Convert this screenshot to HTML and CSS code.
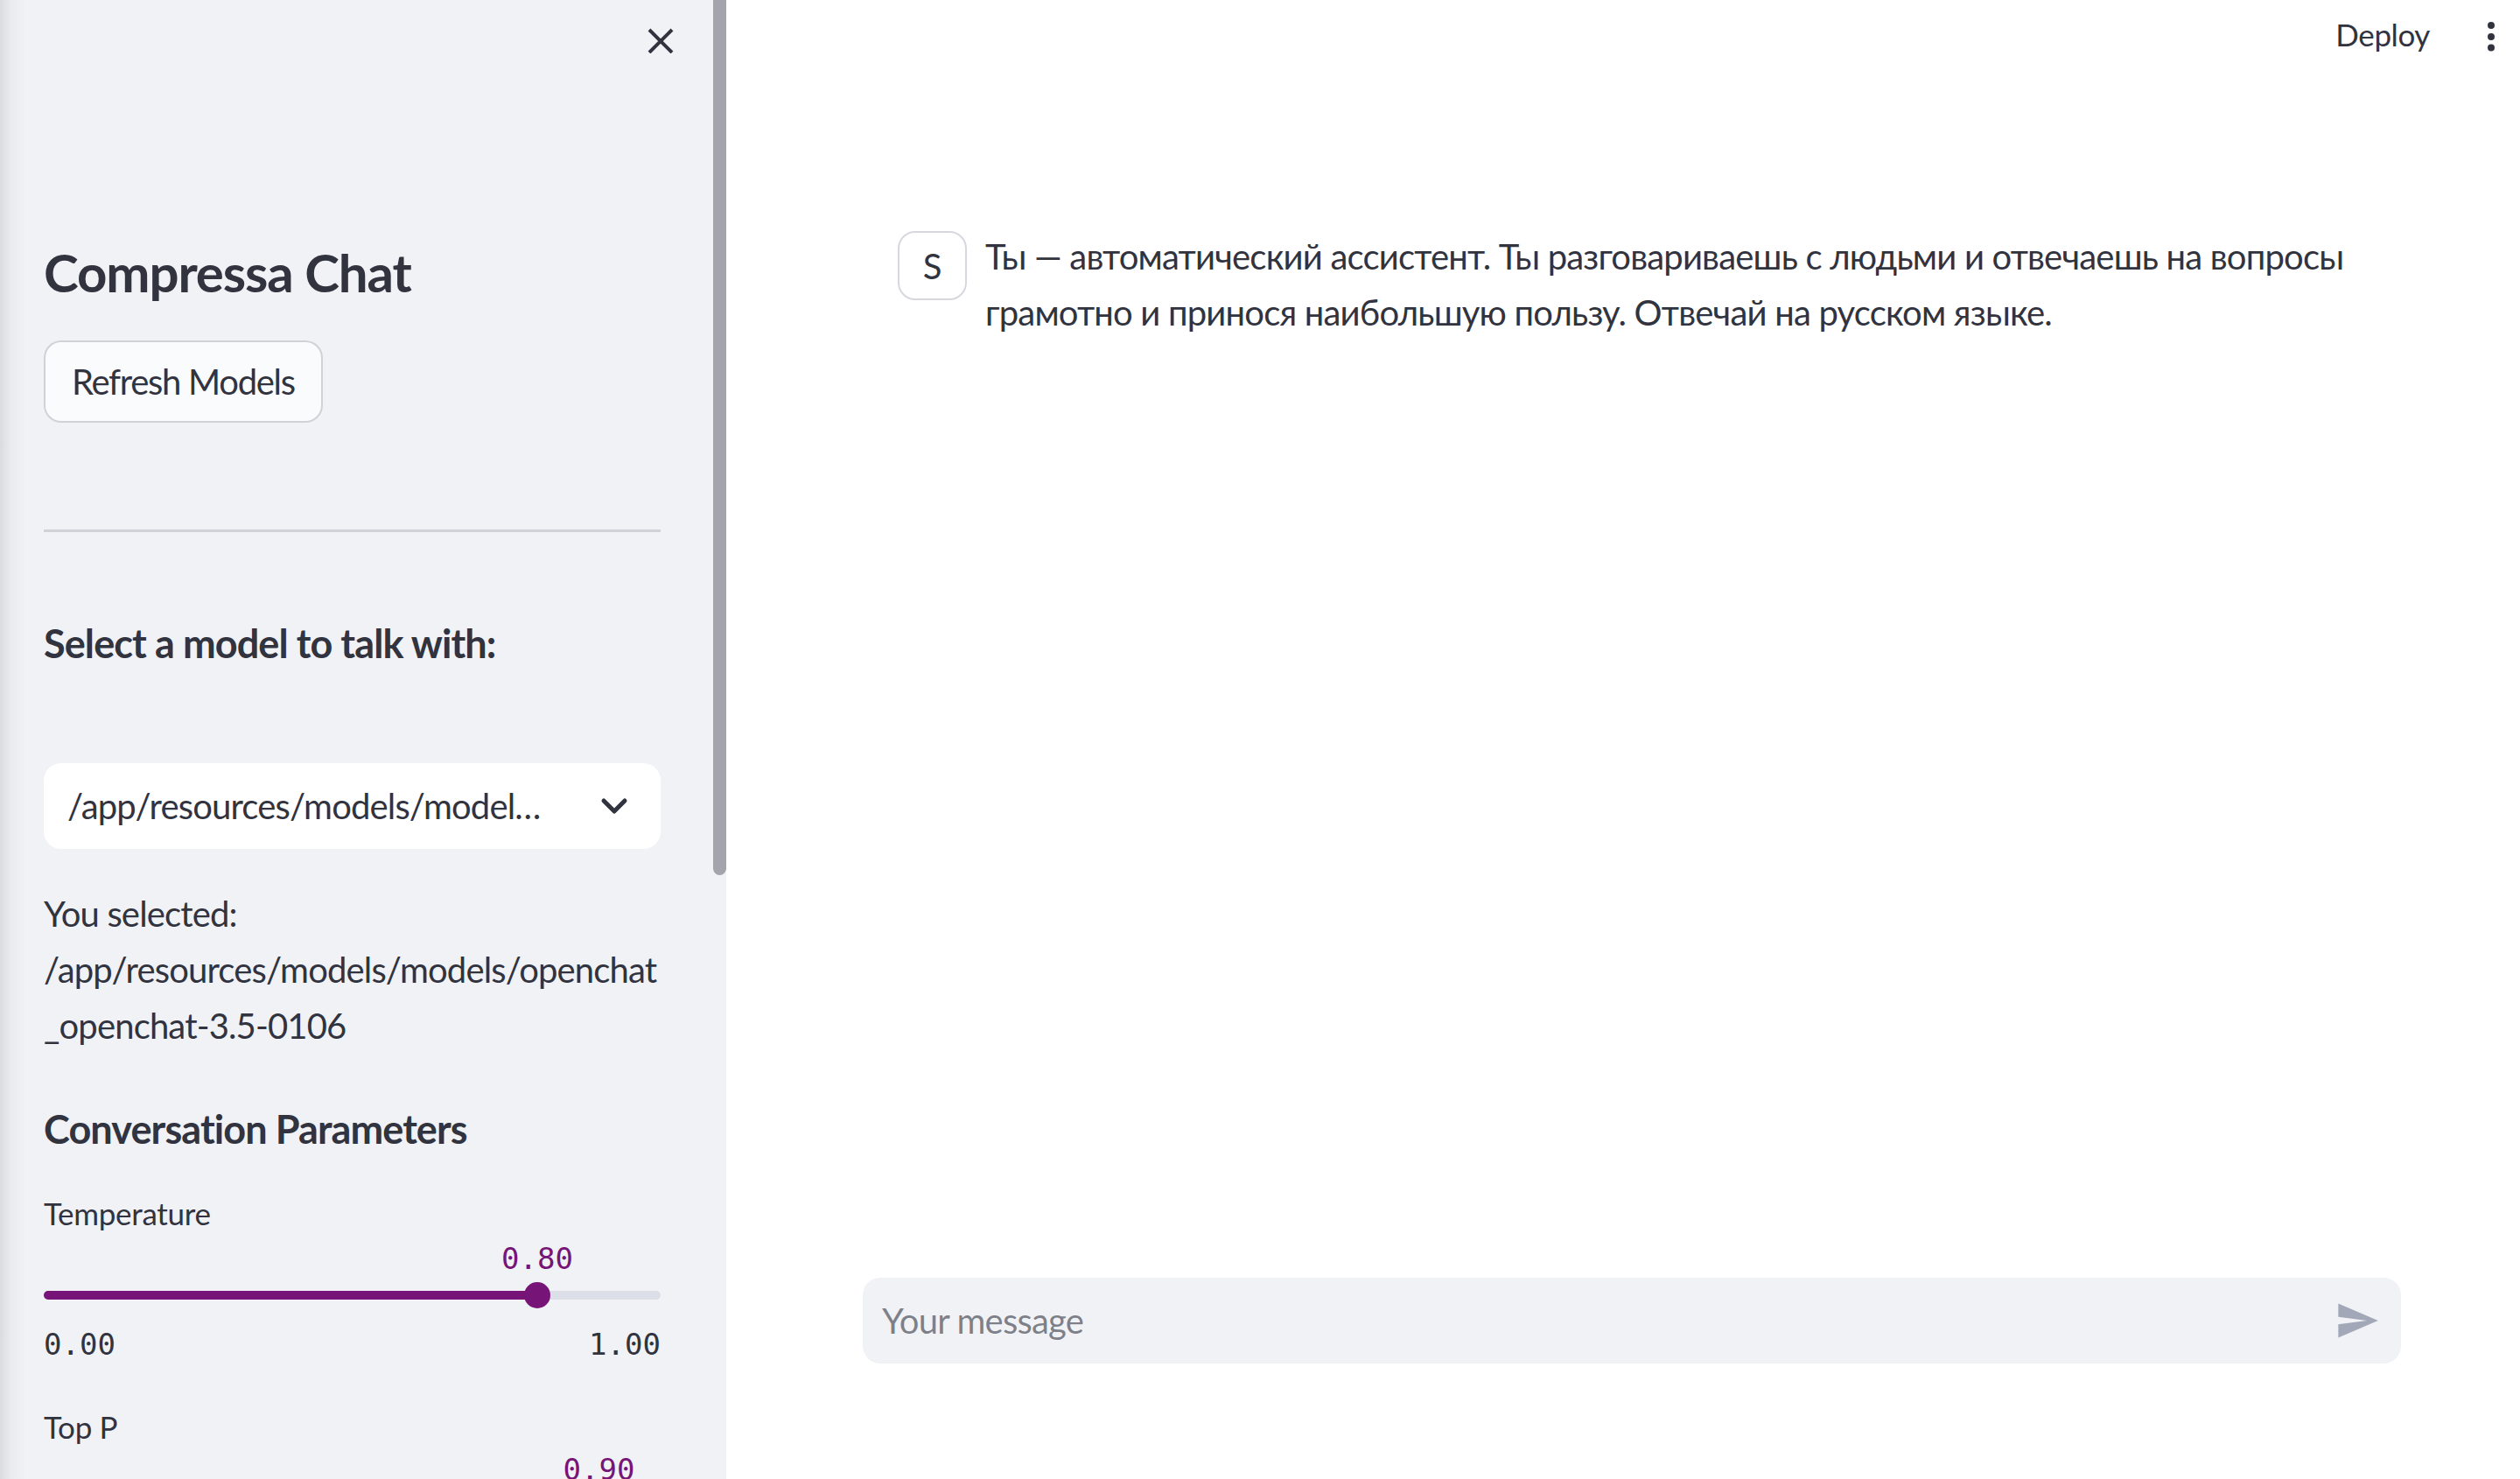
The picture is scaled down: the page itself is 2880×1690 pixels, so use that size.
FILE: index.html
```html
<!DOCTYPE html>
<html lang="ru">
<head>
<meta charset="utf-8">
<title>Compressa Chat</title>
<link rel="stylesheet" href="styles.css">
</head>
<body>
<div class="app">
  <aside class="sidebar">
    <div class="sidebar-inner">
      <div class="sb-header">
        <button class="close-btn" aria-label="Close sidebar">
          <svg width="30" height="30" viewBox="0 0 30 30"><path d="M2 3 L28 29 M28 3 L2 29" stroke="#31333f" stroke-width="4" fill="none"/></svg>
        </button>
      </div>
      <h1 class="sb-title">Compressa Chat</h1>
      <button class="btn">Refresh Models</button>
      <hr class="divider">
      <h3 class="sb-sub select-head">Select a model to talk with:</h3>
      <div class="select">
        <span class="select-value">/app/resources/models/model…</span>
        <svg class="chevron" width="34" height="24" viewBox="0 0 34 24"><path d="M5 6 L17 18 L29 6" stroke="#31333f" stroke-width="5" fill="none" stroke-linecap="round" stroke-linejoin="round"/></svg>
      </div>
      <div class="selected">
        <span class="line">You selected:</span>
        <span class="line">/app/resources/models/models/openchat</span>
        <span class="line">_openchat-3.5-0106</span>
      </div>
      <h3 class="sb-sub params-head">Conversation Parameters</h3>
      <div class="slider-widget temp">
        <div class="slider-label">Temperature</div>
        <div class="slider-value-row"><span class="slider-value" style="left:80%">0.80</span></div>
        <div class="track"><div class="fill" style="width:80%"></div><div class="thumb" style="left:80%"></div></div>
        <div class="ticks"><span>0.00</span><span>1.00</span></div>
      </div>
      <div class="slider-widget topp">
        <div class="slider-label">Top P</div>
        <div class="slider-value-row"><span class="slider-value" style="left:90%">0.90</span></div>
        <div class="track"><div class="fill" style="width:90%"></div><div class="thumb" style="left:90%"></div></div>
        <div class="ticks"><span>0.00</span><span>1.00</span></div>
      </div>
    </div>
    <div class="scroll-thumb"></div>
  </aside>
  <main class="main">
    <header class="toolbar">
      <span class="deploy">Deploy</span>
      <svg class="dots" width="8" height="34" viewBox="0 0 8 34"><circle cx="4" cy="4" r="4" fill="#31333f"/><circle cx="4" cy="17" r="4" fill="#31333f"/><circle cx="4" cy="29.5" r="4" fill="#31333f"/></svg>
    </header>
    <section class="chat">
      <div class="message">
        <div class="avatar">S</div>
        <div class="msg-text">Ты — автоматический ассистент. Ты разговариваешь с людьми и отвечаешь на вопросы грамотно и принося наибольшую пользу. Отвечай на русском языке.</div>
      </div>
    </section>
    <div class="bottom">
      <div class="chat-input">
        <span class="placeholder">Your message</span>
        <svg class="send" width="52" height="52" viewBox="0 0 24 24"><path d="M2.01 21L23 12 2.01 3 2 10l15 2-15 2z" fill="#a3a8b8"/></svg>
      </div>
    </div>
  </main>
</div>
</body>
</html>
```
FILE: styles.css
```css
* { box-sizing: border-box; }
html, body { margin: 0; padding: 0; }
body {
  width: 2880px;
  height: 1690px;
  overflow: hidden;
  background: #ffffff;
  color: #31333f;
  font-family: Lato, "Noto Sans", sans-serif;
}
.app { display: flex; height: 1690px; }

/* Sidebar */
.sidebar {
  position: relative;
  flex: none;
  width: 830px;
  height: 1690px;
  overflow: hidden;
  background: linear-gradient(to right, #d9dbe0 0px, #e9ebef 12px, #f0f2f6 30px);
}
.sidebar-inner { padding: 0 75px 0 50px; }
.sb-header { display: flex; justify-content: flex-end; padding-top: 31px; margin-right: -15px; }
.close-btn { border: 0; background: none; padding: 0; width: 30px; height: 30px; display: block; }
.close-btn svg { display: block; }
.sb-title {
  margin: 214px 0 0;
  font-size: 60px;
  line-height: 72px;
  font-weight: 700;
  letter-spacing: -1.1px;
}
.btn {
  display: flex;
  align-items: center;
  margin-top: 42px;
  height: 94px;
  padding: 0 30px;
  border: 2.5px solid rgba(49, 51, 63, 0.2);
  border-radius: 20px;
  background: #fafbfc;
  color: #31333f;
  font-family: inherit;
  font-size: 40px;
  letter-spacing: -1.3px;
}
.divider {
  margin: 122px 0 0;
  border: 0;
  height: 2.5px;
  background: #d0d2d8;
}
.sb-sub {
  margin: 0;
  font-size: 45px;
  line-height: 54px;
  font-weight: 700;
  letter-spacing: -0.9px;
}
.select-head { margin-top: 100px; }
.select {
  margin-top: 110px;
  height: 98px;
  background: #ffffff;
  border-radius: 20px;
  display: flex;
  align-items: center;
  justify-content: space-between;
  padding: 0 36px 0 27px;
  font-size: 40px;
  letter-spacing: -0.85px;
}
.chevron { display: block; }
.selected { margin-top: 42px; font-size: 40px; line-height: 64px; letter-spacing: -0.85px; }
.selected .line { display: block; white-space: nowrap; }
.params-head { margin-top: 59px; }
.slider-label { font-size: 35px; line-height: 42px; letter-spacing: -0.3px; }
.temp .slider-label { margin-top: 48px; }
.topp .slider-label { margin-top: 53px; }
.slider-value-row { position: relative; height: 40px; margin-top: 11px; }
.slider-value {
  position: absolute;
  top: 0;
  transform: translateX(-50%);
  font-family: "DejaVu Sans Mono", "Liberation Mono", monospace;
  font-size: 34px;
  line-height: 40px;
  color: #761577;
}
.topp .slider-value-row { margin-top: 8px; }
.track {
  position: relative;
  margin-top: 17px;
  height: 10px;
  border-radius: 5px;
  background: #dcdfe8;
}
.fill { height: 10px; border-radius: 5px; background: #761577; }
.thumb {
  position: absolute;
  top: -10px;
  width: 30px;
  height: 30px;
  margin-left: -15px;
  border-radius: 50%;
  background: #761577;
}
.ticks {
  display: flex;
  justify-content: space-between;
  margin-top: 31px;
  font-family: "DejaVu Sans Mono", "Liberation Mono", monospace;
  font-size: 34px;
  line-height: 40px;
}
.scroll-thumb {
  position: absolute;
  top: -20px;
  right: 0;
  width: 15px;
  height: 1020px;
  border-radius: 8px;
  background: #a4a4ac;
}

/* Main */
.main { flex: 1; display: flex; flex-direction: column; min-width: 0; }
.toolbar {
  height: 80px;
  padding: 18px 29px 0 0;
  display: flex;
  justify-content: flex-end;
  align-items: flex-start;
  gap: 66px;
}
.deploy { font-size: 35px; line-height: 42px; letter-spacing: -0.4px; }
.dots { display: block; margin-top: 7px; }
.chat { flex: 1; padding-top: 144px; }
.message {
  margin-left: 156px;
  width: 1758px;
  padding: 40px;
  display: flex;
  gap: 21px;
  align-items: flex-start;
}
.avatar {
  flex: none;
  width: 79px;
  height: 79px;
  border: 2.5px solid #d6d8de;
  border-radius: 20px;
  display: flex;
  align-items: center;
  justify-content: center;
  font-size: 40px;
}
.msg-text { margin-top: -3px; font-size: 40px; line-height: 64px; letter-spacing: -0.8px; }
.bottom { padding-bottom: 132px; }
.chat-input {
  margin-left: 156px;
  width: 1758px;
  height: 98px;
  border-radius: 20px;
  background: #f0f2f6;
  display: flex;
  align-items: center;
  justify-content: space-between;
  padding: 0 24px 0 22px;
}
.placeholder { font-size: 40px; color: rgba(49, 51, 63, 0.6); letter-spacing: -0.8px; }
.send { display: block; }
```
